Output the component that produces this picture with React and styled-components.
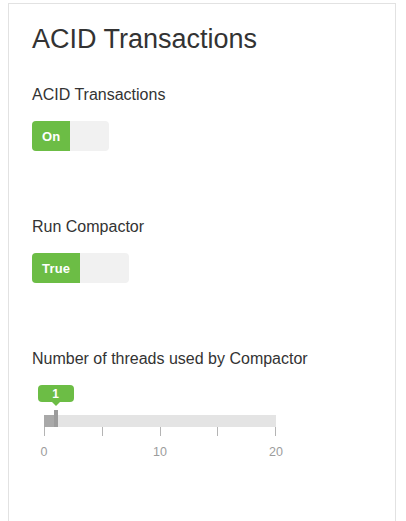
import React from 'react';
import styled, { createGlobalStyle } from 'styled-components';

const GlobalStyle = createGlobalStyle`
  body {
    margin: 0;
    padding: 3px 10px 0 8px;
    background: #fff;
    font-family: "Liberation Sans", Arial, Helvetica, sans-serif;
    color: #333;
  }
`;

const Card = styled.section`
  border: 1px solid #e2e2e2;
  border-bottom: none;
  padding: 20px 23px 60px;
  min-height: 460px;
`;

const Title = styled.h1`
  margin: 0 0 32px;
  font-size: 27px;
  line-height: 30px;
  font-weight: 400;
  color: #333;
`;

const Field = styled.div`
  display: flex;
  flex-direction: column;
  align-items: flex-start;
  margin-bottom: ${p => p.$gap || 67}px;
`;

const Label = styled.label`
  font-size: 16px;
  line-height: 18px;
  color: #333;
  margin-bottom: ${p => p.$gap || 17}px;
`;

const Toggle = styled.div`
  display: inline-grid;
  grid-template-columns: 1fr 1fr;
  height: 30px;
  border-radius: 4px;
  overflow: hidden;
  background: #f1f1f1;
`;

const ToggleOn = styled.span`
  background: #6cbd45;
  color: #fff;
  font-weight: 700;
  font-size: 13px;
  letter-spacing: 0.2px;
  padding: 0 10px;
  display: flex;
  align-items: center;
  justify-content: center;
`;

const Slider = styled.div`
  position: relative;
  width: 232px;
  margin-left: 12px;
  padding-top: 30px;
`;

const Bubble = styled.div`
  position: absolute;
  top: 0;
  transform: translateX(-50%);
  width: 36px;
  height: 17px;
  border-radius: 4px;
  background: #6cbd45;
  color: #fff;
  font-weight: 700;
  font-size: 12px;
  display: flex;
  align-items: center;
  justify-content: center;

  &::after {
    content: '';
    position: absolute;
    left: 50%;
    bottom: -4px;
    margin-left: -4px;
    border-left: 4px solid transparent;
    border-right: 4px solid transparent;
    border-top: 4px solid #6cbd45;
  }
`;

const Track = styled.div`
  position: relative;
  height: 12px;
  background: #e4e4e4;
`;

const Fill = styled.div`
  height: 100%;
  background: #a9a9a9;
`;

const Handle = styled.div`
  position: absolute;
  top: -5px;
  width: 4px;
  height: 17px;
  margin-left: -2px;
  background: #9c9c9c;
`;

const Ticks = styled.div`
  display: flex;
  justify-content: space-between;
  height: 9px;
`;

const Tick = styled.span`
  width: 1px;
  background: #b4b4b4;
`;

const TickLabels = styled.div`
  display: flex;
  justify-content: space-between;
  margin-top: 9px;
`;

const TickLabel = styled.span`
  width: 0;
  display: flex;
  justify-content: center;
  font-size: 12.5px;
  line-height: 14px;
  color: #9c9c9c;
  white-space: nowrap;
`;

const SwitchField = ({ label, on }) => (
  <Field>
    <Label>{label}</Label>
    <Toggle>
      <ToggleOn>{on}</ToggleOn>
      <span />
    </Toggle>
  </Field>
);

const RangeField = ({ label, value, min, max }) => {
  const pct = ((value - min) / (max - min)) * 100;
  return (
    <Field $gap={20}>
      <Label $gap={17}>{label}</Label>
      <Slider>
        <Bubble style={{ left: `${pct}%` }}>{value}</Bubble>
        <Track>
          <Fill style={{ width: `${pct}%` }} />
          <Handle style={{ left: `${pct}%` }} />
        </Track>
        <Ticks>
          {[0, 1, 2, 3, 4].map(i => <Tick key={i} />)}
        </Ticks>
        <TickLabels>
          <TickLabel>0</TickLabel>
          <TickLabel>10</TickLabel>
          <TickLabel>20</TickLabel>
        </TickLabels>
      </Slider>
    </Field>
  );
};

export default function App() {
  return (
    <>
      <GlobalStyle />
      <Card>
        <Title>ACID Transactions</Title>
        <SwitchField label="ACID Transactions" on="On" />
        <SwitchField label="Run Compactor" on="True" />
        <RangeField label="Number of threads used by Compactor" value={1} min={0} max={20} />
      </Card>
    </>
  );
}
